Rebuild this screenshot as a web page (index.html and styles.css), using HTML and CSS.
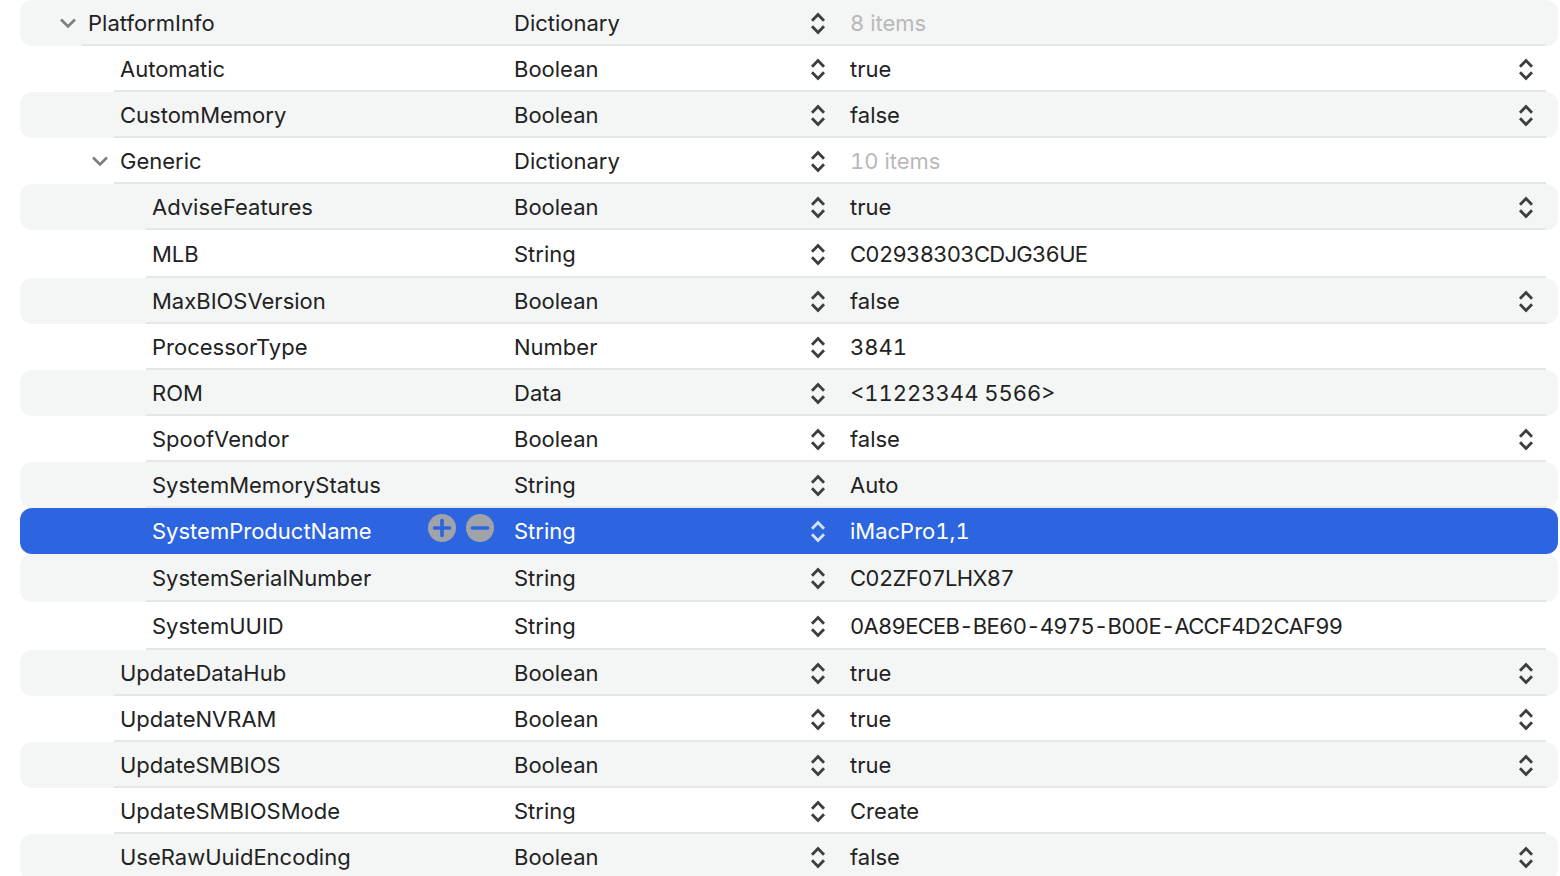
FILE: index.html
```html
<!DOCTYPE html>
<html lang="en">
<head>
<meta charset="utf-8">
<title>PlatformInfo</title>
<link rel="stylesheet" href="styles.css">
</head>
<body>
<svg class="defs" width="0" height="0" aria-hidden="true">
  <symbol id="updown" viewBox="0 0 16 24"><path d="M2 9.800 8 3.600l6 6.200M2 15.200 8 21.400l6-6.200" fill="none" stroke="currentColor" stroke-width="2.800"/></symbol>
  <symbol id="chev" viewBox="0 0 18 12"><path d="M2 2.500 9 9.500l7-7" fill="none" stroke="currentColor" stroke-width="2.600"/></symbol>
  <symbol id="plus" viewBox="0 0 28 28"><circle cx="14" cy="14" r="14" fill="#a0a3aa"/><path d="M14 6.500v15M6.500 14h15" stroke="#2d65e0" stroke-width="3.600" stroke-linecap="round"/></symbol>
  <symbol id="minus" viewBox="0 0 28 28"><circle cx="14" cy="14" r="14" fill="#a0a3aa"/><path d="M6.500 14h15" stroke="#2d65e0" stroke-width="3.600" stroke-linecap="round"/></symbol>
</svg>
<main class="table">
  <div class="row odd l0"><div class="gutter"><svg class="chev"><use href="#chev"/></svg></div><div class="body"><div class="key">PlatformInfo</div><div class="type">Dictionary</div><svg class="step"><use href="#updown"/></svg><div class="val muted">8 items</div></div></div>
  <div class="row l1"><div class="gutter"></div><div class="body"><div class="key">Automatic</div><div class="type">Boolean</div><svg class="step"><use href="#updown"/></svg><div class="val">true</div><svg class="step"><use href="#updown"/></svg></div></div>
  <div class="row odd l1"><div class="gutter"></div><div class="body"><div class="key">CustomMemory</div><div class="type">Boolean</div><svg class="step"><use href="#updown"/></svg><div class="val">false</div><svg class="step"><use href="#updown"/></svg></div></div>
  <div class="row l1"><div class="gutter"><svg class="chev"><use href="#chev"/></svg></div><div class="body"><div class="key">Generic</div><div class="type">Dictionary</div><svg class="step"><use href="#updown"/></svg><div class="val muted">10 items</div></div></div>
  <div class="row odd l2"><div class="gutter"></div><div class="body"><div class="key">AdviseFeatures</div><div class="type">Boolean</div><svg class="step"><use href="#updown"/></svg><div class="val">true</div><svg class="step"><use href="#updown"/></svg></div></div>
  <div class="row tall l2"><div class="gutter"></div><div class="body"><div class="key">MLB</div><div class="type">String</div><svg class="step"><use href="#updown"/></svg><div class="val serial">C02938303CDJG36UE</div></div></div>
  <div class="row odd l2"><div class="gutter"></div><div class="body"><div class="key">MaxBIOSVersion</div><div class="type">Boolean</div><svg class="step"><use href="#updown"/></svg><div class="val">false</div><svg class="step"><use href="#updown"/></svg></div></div>
  <div class="row l2"><div class="gutter"></div><div class="body"><div class="key">ProcessorType</div><div class="type">Number</div><svg class="step"><use href="#updown"/></svg><div class="val">3841</div></div></div>
  <div class="row odd l2"><div class="gutter"></div><div class="body"><div class="key">ROM</div><div class="type">Data</div><svg class="step"><use href="#updown"/></svg><div class="val">&lt;11223344 5566&gt;</div></div></div>
  <div class="row l2"><div class="gutter"></div><div class="body"><div class="key">SpoofVendor</div><div class="type">Boolean</div><svg class="step"><use href="#updown"/></svg><div class="val">false</div><svg class="step"><use href="#updown"/></svg></div></div>
  <div class="row odd l2"><div class="gutter"></div><div class="body"><div class="key">SystemMemoryStatus</div><div class="type">String</div><svg class="step"><use href="#updown"/></svg><div class="val">Auto</div></div></div>
  <div class="row selected l2"><div class="gutter"></div><div class="body"><div class="key">SystemProductName<span class="actions"><svg class="action"><use href="#plus"/></svg><svg class="action"><use href="#minus"/></svg></span></div><div class="type">String</div><svg class="step"><use href="#updown"/></svg><div class="val">iMacPro1,1</div></div></div>
  <div class="row odd tall l2"><div class="gutter"></div><div class="body"><div class="key">SystemSerialNumber</div><div class="type">String</div><svg class="step"><use href="#updown"/></svg><div class="val serial">C02ZF07LHX87</div></div></div>
  <div class="row tall l2"><div class="gutter"></div><div class="body"><div class="key">SystemUUID</div><div class="type">String</div><svg class="step"><use href="#updown"/></svg><div class="val serial">0A89ECEB-BE60-4975-B00E-ACCF4D2CAF99</div></div></div>
  <div class="row odd l1"><div class="gutter"></div><div class="body"><div class="key">UpdateDataHub</div><div class="type">Boolean</div><svg class="step"><use href="#updown"/></svg><div class="val">true</div><svg class="step"><use href="#updown"/></svg></div></div>
  <div class="row l1"><div class="gutter"></div><div class="body"><div class="key">UpdateNVRAM</div><div class="type">Boolean</div><svg class="step"><use href="#updown"/></svg><div class="val">true</div><svg class="step"><use href="#updown"/></svg></div></div>
  <div class="row odd l1"><div class="gutter"></div><div class="body"><div class="key">UpdateSMBIOS</div><div class="type">Boolean</div><svg class="step"><use href="#updown"/></svg><div class="val">true</div><svg class="step"><use href="#updown"/></svg></div></div>
  <div class="row l1"><div class="gutter"></div><div class="body"><div class="key">UpdateSMBIOSMode</div><div class="type">String</div><svg class="step"><use href="#updown"/></svg><div class="val">Create</div></div></div>
  <div class="row odd l1"><div class="gutter"></div><div class="body"><div class="key">UseRawUuidEncoding</div><div class="type">Boolean</div><svg class="step"><use href="#updown"/></svg><div class="val">false</div><svg class="step"><use href="#updown"/></svg></div></div>
</main>
</body>
</html>
```
FILE: styles.css
```css
html, body {
  margin: 0;
  height: 100%;
  overflow: hidden;
  background: #fff;
}
.defs { position: absolute; }
.table {
  padding-left: 20px;
  width: 1538px;
  font-family: Inter, sans-serif;
  font-size: 22px;
  font-variant-numeric: tabular-nums;
  color: #222;
}
.row {
  display: flex;
  height: 46px;
  border-radius: 12px;
}
.row.tall { height: 48px; }
.row.odd { background: #f4f5f5; }
.row.selected { background: #2d65e0; color: #fff; }
.gutter {
  flex: none;
  display: flex;
  align-items: center;
  justify-content: flex-end;
  padding-right: 5px;
  box-sizing: border-box;
}
.l0 .gutter { width: 62px; }
.l1 .gutter { width: 94px; }
.l2 .gutter { width: 126px; }
.l0 .key { width: 432px; }
.l1 .key { width: 400px; }
.l2 .key { width: 368px; }
.chev { width: 18px; height: 12px; color: #7d7d7d; }
.body {
  flex: 1;
  display: flex;
  align-items: center;
  margin-right: 12px;
  padding-top: 1px;
  border-bottom: 2px solid #e5e6e6;
  min-width: 0;
}
.selected .body { border-bottom-color: transparent; }
.key {
  flex: none;
  box-sizing: border-box;
  padding: 0 20px 0 6px;
  display: flex;
  align-items: center;
  justify-content: space-between;
}
.type { flex: none; width: 296px; }
.step { flex: none; width: 16px; height: 24px; color: #3d3d3d; }
.selected .step { color: #d5e2fb; }
.val { flex: none; width: 668px; margin-left: 24px; }
.val.muted { color: #b9b9b9; }
.val.serial { letter-spacing: -0.7px; }
.actions { display: flex; gap: 10px; margin-top: -6px; }
.action { width: 28px; height: 28px; }
```
